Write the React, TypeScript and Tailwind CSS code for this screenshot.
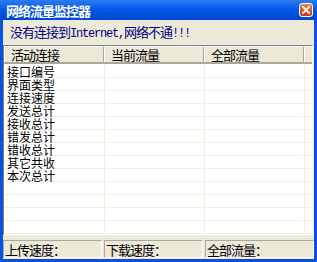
import React from "react";

const rows = [
  "接口编号",
  "界面类型",
  "连接速度",
  "发送总计",
  "接收总计",
  "错发总计",
  "错收总计",
  "其它共收",
  "本次总计",
  "",
  "",
  "",
  "",
];

const CloseIcon = () => (
  <div className="w-[14px] h-[14px] mr-[4px] rounded-[3px] border border-white bg-linear-to-b from-[#e8845f] via-[#d8552c] to-[#c23d14] flex items-center justify-center">
    <svg width="8" height="8" viewBox="0 0 8 8">
      <path d="M1 1 L7 7 M7 1 L1 7" stroke="white" strokeWidth="1.8" strokeLinecap="square" />
    </svg>
  </div>
);

const App = () => {
  return (
    <div className="w-[317px] h-[262px] bg-[#0a50e2] flex flex-col font-['Noto_Sans_CJK_SC',sans-serif] text-[13px] tracking-[-1px] leading-[13px] text-black overflow-hidden">
      {/* title bar */}
      <div className="h-[20px] flex flex-row items-center justify-between bg-linear-to-b from-[#2c7bf2] via-[#0056e6] to-[#0049d2]">
        <p className="pl-[6px] text-white font-bold">网络流量监控器</p>
        <CloseIcon />
      </div>

      <div className="flex-1 mx-[3px] mb-[3px] bg-[#ece9d8] flex flex-col">
        <div className="h-[25px] pl-[7px] flex items-center text-[#000080]">
          <p>
            没有连接到
            <span className="font-['Liberation_Mono',monospace] text-[12px] tracking-[-1.2px]">Internet,</span>
            网络不通
            <span className="font-['Liberation_Mono',monospace] text-[12px] tracking-[-1.2px]">!!!</span>
          </p>
        </div>

        {/* list view */}
        <div className="h-[190px] w-[310px] border-l border-t border-[#808080] border-r-white border-b-white border-r border-b bg-white flex flex-col">
          <div className="h-[18px] flex flex-row bg-[#ece9d8] border-b-2 border-[#aca899]">
            <div className="w-[100px] h-full border-l border-t border-white border-r-[#aca899] border-r pl-[6px] flex items-center">活动连接</div>
            <div className="w-[100px] h-full border-l border-t border-white border-r-[#aca899] border-r pl-[6px] flex items-center">当前流量</div>
            <div className="w-[100px] h-full border-l border-t border-white border-r-[#aca899] border-r pl-[6px] flex items-center">全部流量</div>
            <div className="flex-1 h-full border-l border-t border-white"></div>
          </div>
          <div className="flex flex-col pt-[1px]">
            {rows.map((r, i) => (
              <div key={i} className="h-[13px] flex flex-row border-b border-[#f1efe2]">
                <div className="w-[101px] h-full border-r border-[#f1efe2] pl-[3px] text-[12px] tracking-normal leading-[11px] flex items-center">{r}</div>
                <div className="w-[100px] h-full border-r border-[#f1efe2]"></div>
                <div className="w-[100px] h-full border-r border-[#f1efe2]"></div>
                <div className="flex-1"></div>
              </div>
            ))}
          </div>
        </div>

        {/* status bar */}
        <div className="mt-[5px] h-[18px] flex flex-row gap-[2px]">
          <div className="w-[99px] h-full border border-[#aca899] border-r-white border-b-white pl-[1px] flex items-center">上传速度：</div>
          <div className="w-[99px] h-full border border-[#aca899] border-r-white border-b-white pl-[1px] flex items-center">下载速度：</div>
          <div className="flex-1 h-full border border-[#aca899] border-r-white border-b-white pl-[1px] flex items-center">全部流量：</div>
        </div>
      </div>
    </div>
  );
};

export default App;
